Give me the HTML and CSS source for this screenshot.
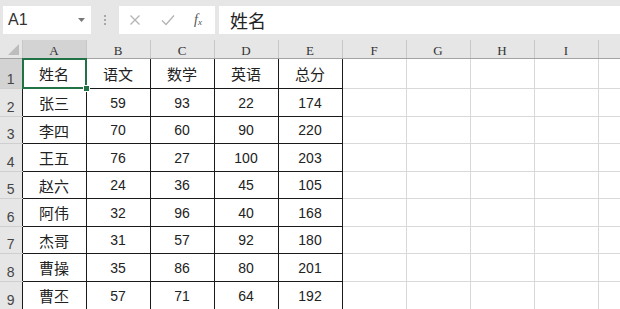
FILE: index.html
```html
<!DOCTYPE html>
<html lang="zh">
<head>
<meta charset="utf-8">
<link rel="stylesheet" href="styles.css">
</head>
<body>
<div class="app">
  <div class="fbar">
    <div class="namebox">
      <span class="ref">A1</span>
      <svg class="dd" width="7" height="4" viewBox="0 0 7 4"><path d="M0 0h7L3.5 4z" fill="#777"/></svg>
    </div>
    <div class="grip"><i></i><i></i><i></i></div>
    <div class="fbtns">
      <svg class="btn" width="12" height="12" viewBox="0 0 12 12"><path d="M1.5 1.5l9 9M10.5 1.5l-9 9" stroke="#b3b3b3" stroke-width="1.3" fill="none"/></svg>
      <svg class="btn" width="14" height="12" viewBox="0 0 14 12"><path d="M1 6.5l4 4L13 1.5" stroke="#b3b3b3" stroke-width="1.3" fill="none"/></svg>
      <span class="fx">f<sub>x</sub></span>
    </div>
    <div class="finput">姓名</div>
  </div>
  <table class="sheet">
    <colgroup>
      <col class="rh"><col class="c"><col class="c"><col class="c"><col class="c"><col class="c"><col class="c"><col class="c"><col class="c"><col class="c"><col class="c">
    </colgroup>
    <tr class="hdr">
      <th class="corner"><span class="tri"></span></th>
      <th class="sel">A</th><th>B</th><th>C</th><th>D</th><th>E</th><th>F</th><th>G</th><th>H</th><th>I</th><th></th>
    </tr>
    <tr class="r1">
      <th class="rn sel">1</th>
      <td class="d zh a1">姓名</td><td class="d zh">语文</td><td class="d zh">数学</td><td class="d zh">英语</td><td class="d zh">总分</td>
      <td></td><td></td><td></td><td></td><td></td>
    </tr>
    <tr class="rh28"><th class="rn">2</th><td class="d zh">张三</td><td class="d">59</td><td class="d">93</td><td class="d">22</td><td class="d">174</td><td></td><td></td><td></td><td></td><td></td></tr>
    <tr class="rh27"><th class="rn">3</th><td class="d zh">李四</td><td class="d">70</td><td class="d">60</td><td class="d">90</td><td class="d">220</td><td></td><td></td><td></td><td></td><td></td></tr>
    <tr class="rh28"><th class="rn">4</th><td class="d zh">王五</td><td class="d">76</td><td class="d">27</td><td class="d">100</td><td class="d">203</td><td></td><td></td><td></td><td></td><td></td></tr>
    <tr class="rh27"><th class="rn">5</th><td class="d zh">赵六</td><td class="d">24</td><td class="d">36</td><td class="d">45</td><td class="d">105</td><td></td><td></td><td></td><td></td><td></td></tr>
    <tr class="rh28"><th class="rn">6</th><td class="d zh">阿伟</td><td class="d">32</td><td class="d">96</td><td class="d">40</td><td class="d">168</td><td></td><td></td><td></td><td></td><td></td></tr>
    <tr class="rh27"><th class="rn">7</th><td class="d zh">杰哥</td><td class="d">31</td><td class="d">57</td><td class="d">92</td><td class="d">180</td><td></td><td></td><td></td><td></td><td></td></tr>
    <tr class="rh28"><th class="rn">8</th><td class="d zh">曹操</td><td class="d">35</td><td class="d">86</td><td class="d">80</td><td class="d">201</td><td></td><td></td><td></td><td></td><td></td></tr>
    <tr class="rh28"><th class="rn">9</th><td class="d zh">曹丕</td><td class="d">57</td><td class="d">71</td><td class="d">64</td><td class="d">192</td><td></td><td></td><td></td><td></td><td></td></tr>
  </table>
</div>
</body>
</html>
```
FILE: styles.css
```css
html, body {
  margin: 0;
  padding: 0;
  background: #ffffff;
  overflow: hidden;
}
.app {
  width: 620px;
  height: 309px;
  overflow: hidden;
  font-family: "Liberation Sans", "Noto Sans CJK SC", sans-serif;
}
.fbar {
  height: 40px;
  background: #e6e6e6;
  display: flex;
  align-items: flex-start;
  padding-top: 6px;
  box-sizing: border-box;
}
.namebox {
  margin-left: 3px;
  width: 88px;
  height: 28px;
  background: #fff;
  display: flex;
  align-items: center;
  justify-content: space-between;
  box-sizing: border-box;
  padding: 0 6px 0 5px;
}
.ref {
  font-size: 16px;
  color: #333;
  font-family: "Liberation Sans", sans-serif;
}
.dd { margin-top: -1px; }
.grip {
  width: 28px;
  height: 28px;
  display: flex;
  flex-direction: column;
  align-items: center;
  justify-content: center;
  gap: 2px;
}
.grip i {
  display: block;
  width: 2px;
  height: 2px;
  background: #a8a8a8;
}
.fbtns {
  width: 96px;
  height: 28px;
  background: #fff;
  display: flex;
  align-items: center;
  box-sizing: border-box;
  padding-left: 10px;
  gap: 20px;
}
.fx {
  font-family: "Liberation Serif", serif;
  font-style: italic;
  font-size: 14px;
  color: #555;
  margin-left: -1px;
}
.fx sub { font-size: 9px; vertical-align: -1px; }
.finput {
  margin-left: 4px;
  flex: 1;
  height: 28px;
  background: #fff;
  font-family: "Noto Sans CJK SC", sans-serif;
  font-size: 18px;
  line-height: 28px;
  color: #222;
  padding-left: 11px;
}
.sheet {
  border-collapse: collapse;
  table-layout: fixed;
  width: 662px;
}
col.rh { width: 22px; }
col.c { width: 64px; }
.hdr th {
  height: 18px;
  padding: 0;
  background: #e6e6e6;
  border-right: 1px solid #c8c8c8;
  border-bottom: 1px solid #a3a3a3;
  font-family: "Liberation Serif", serif;
  font-weight: normal;
  font-size: 13px;
  color: #333;
  vertical-align: bottom;
  line-height: 14px;
}
.hdr th.sel {
  background: #d3d3d3;
}
.corner {
  position: relative;
}
.tri {
  position: absolute;
  right: 3px;
  bottom: 3px;
  width: 0;
  height: 0;
  border-left: 11px solid transparent;
  border-bottom: 11px solid #bdbdbd;
}
th.rn {
  background: #e6e6e6;
  border-bottom: 1px solid #cfcfcf;
  border-right: none;
  font-weight: normal;
  font-size: 14px;
  color: #444;
  vertical-align: bottom;
  padding: 0 0 1px;
  line-height: 16px;
  font-family: "Liberation Sans", sans-serif;
}
th.rn.sel { background: #d3d3d3; }
td {
  border: 1px solid #d9d9d9;
  padding: 0;
  text-align: center;
  vertical-align: middle;
  font-size: 14px;
  color: #222;
  font-family: "Liberation Sans", sans-serif;
}
td.d {
  border: 1px solid #1a1a1a;
}
td.zh {
  font-family: "Noto Sans CJK SC", sans-serif;
  font-size: 15px;
}
tr.r1 { height: 30px; }
tr.rh28 { height: 28px; }
tr.rh27 { height: 27px; }
td.a1 { position: relative; }
td.a1::after {
  content: "";
  position: absolute;
  left: -1px;
  top: -1px;
  right: -1px;
  bottom: -1px;
  border: 2px solid #217346;
}
td.a1::before {
  content: "";
  position: absolute;
  right: -4px;
  bottom: -4px;
  width: 5px;
  height: 5px;
  background: #217346;
  border: 1px solid #fff;
  z-index: 2;
}
```
